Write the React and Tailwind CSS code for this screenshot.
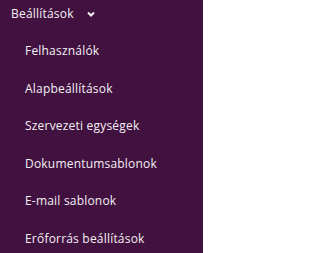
import React from 'react';

const items = [
  'Felhasználók',
  'Alapbeállítások',
  'Szervezeti egységek',
  'Dokumentumsablonok',
  'E-mail sablonok',
  'Erőforrás beállítások',
];

const App = () => {
  return (
    <div className="w-[203px] h-[253px] bg-[#41123f] text-[#f5eff5] font-['Open_Sans',sans-serif] text-[12px] tracking-[0.2px] overflow-hidden">
      <div className="flex items-center h-[28px] pl-[11px] gap-[13px]">
        <span>Beállítások</span>
        <svg width="8" height="6" viewBox="0 0 8 6" fill="none" stroke="currentColor" strokeWidth="2">
          <path d="M1 1.5 L4 4.5 L7 1.5" />
        </svg>
      </div>
      <ul className="flex flex-col mt-[4.5px]">
        {items.map((label) => (
          <li key={label} className="h-[37.5px] flex items-center pl-[25px]">{label}</li>
        ))}
      </ul>
    </div>
  );
};

export default App;
